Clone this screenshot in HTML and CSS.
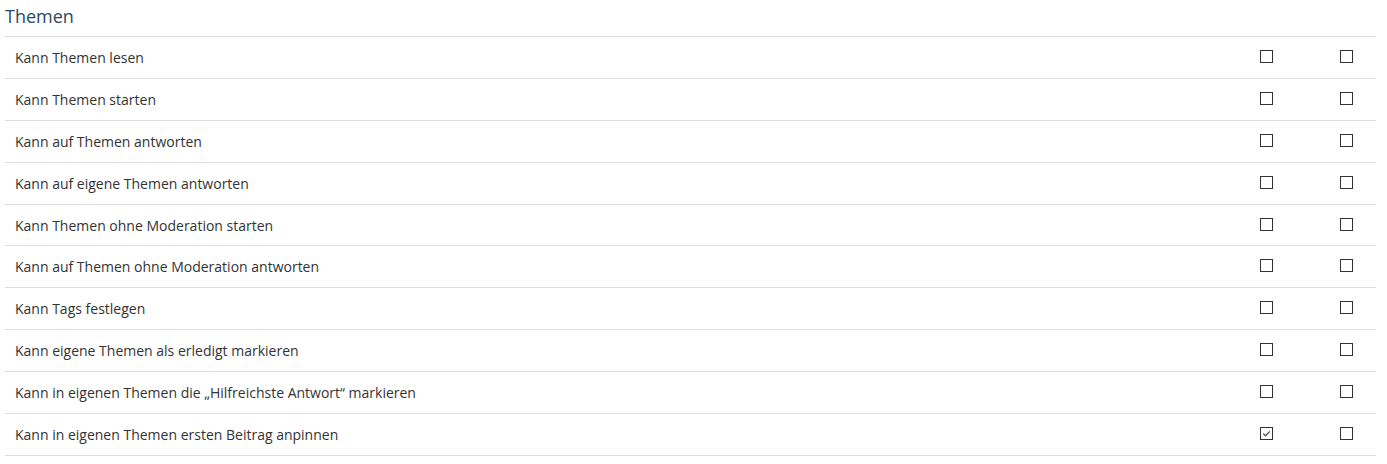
FILE: index.html
```html
<!DOCTYPE html>
<html lang="de">
<head>
<meta charset="utf-8">
<title>Themen</title>
<link rel="stylesheet" href="styles.css">
</head>
<body>
<section class="perm-section">
  <h2 class="perm-title">Themen</h2>
  <div class="perm-table">
    <div class="perm-row"><span class="perm-label">Kann Themen lesen</span><span class="cb"></span><span class="cb"></span></div>
    <div class="perm-row"><span class="perm-label">Kann Themen starten</span><span class="cb"></span><span class="cb"></span></div>
    <div class="perm-row"><span class="perm-label">Kann auf Themen antworten</span><span class="cb"></span><span class="cb"></span></div>
    <div class="perm-row"><span class="perm-label">Kann auf eigene Themen antworten</span><span class="cb"></span><span class="cb"></span></div>
    <div class="perm-row"><span class="perm-label">Kann Themen ohne Moderation starten</span><span class="cb"></span><span class="cb"></span></div>
    <div class="perm-row"><span class="perm-label">Kann auf Themen ohne Moderation antworten</span><span class="cb"></span><span class="cb"></span></div>
    <div class="perm-row"><span class="perm-label">Kann Tags festlegen</span><span class="cb"></span><span class="cb"></span></div>
    <div class="perm-row"><span class="perm-label">Kann eigene Themen als erledigt markieren</span><span class="cb"></span><span class="cb"></span></div>
    <div class="perm-row"><span class="perm-label">Kann in eigenen Themen die „Hilfreichste Antwort“ markieren</span><span class="cb"></span><span class="cb"></span></div>
    <div class="perm-row"><span class="perm-label">Kann in eigenen Themen ersten Beitrag anpinnen</span><span class="cb checked"><svg viewBox="0 0 11 11" width="11" height="11"><path d="M2.2 5.6 L4.6 7.8 L8.8 3.4" fill="none" stroke="#555" stroke-width="1.3"/></svg></span><span class="cb"></span></div>
  </div>
</section>
</body>
</html>
```

FILE: styles.css
```css
html, body {
  margin: 0;
  padding: 0;
  background: #fff;
}
body {
  font-family: "Open Sans", "Liberation Sans", sans-serif;
  color: #333;
}
.perm-section {
  margin: 0 11px 0 5px;
}
.perm-title {
  margin: 0;
  padding: 3px 0 0 0;
  height: 36px;
  box-sizing: border-box;
  font-size: 18px;
  font-weight: 400;
  line-height: 26px;
  color: #2b4a60;
}
.perm-table {
  border-top: 1px solid #dedede;
}
.perm-row {
  display: grid;
  grid-template-columns: 1fr 101px 59px;
  align-items: center;
  height: 40.9px;
  border-bottom: 1px solid #dedede;
  font-size: 14px;
}
.perm-label {
  padding: 1px 0 0 10px;
  line-height: 20px;
}
.cb {
  justify-self: center;
  width: 13px;
  height: 13px;
  margin-bottom: 2px;
  box-sizing: border-box;
  border: 1px solid #333;
  display: flex;
  align-items: center;
  justify-content: center;
  background: #fff;
}
.cb svg {
  display: block;
}
```
